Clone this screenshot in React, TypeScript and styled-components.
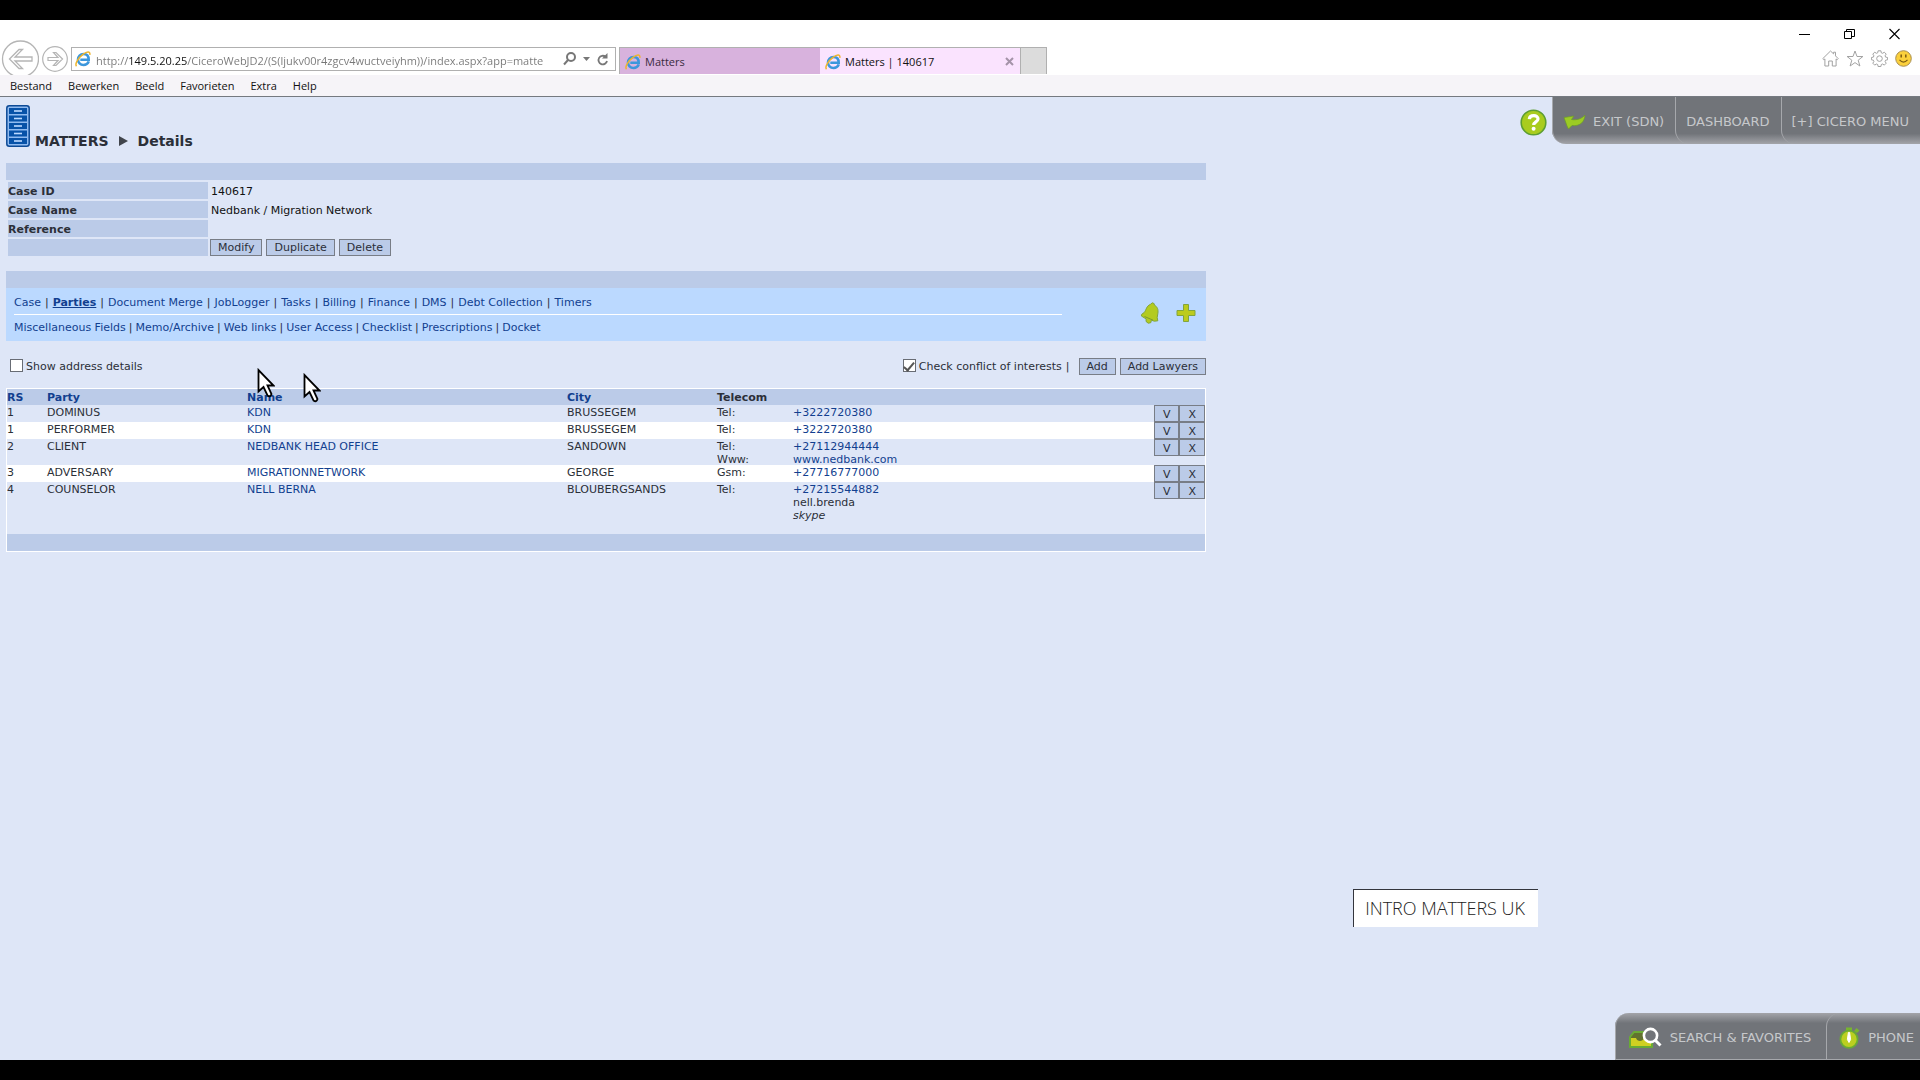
import React, { Fragment } from "react";
import styled, { createGlobalStyle, css } from "styled-components";

const color = {
  page: "#dee6f7",
  bar: "#bbcbe8",
  panel: "#bbd9ff",
  link: "#123f8f",
  text: "#2b2f38",
  edge: "#787d86",
  dock: "#717479",
  dockEdge: "#a6a8ac",
};

const uiFont = `"Open Sans", "Noto Sans", sans-serif`;
const appFont = `"DejaVu Sans", Verdana, sans-serif`;

const GlobalStyle = createGlobalStyle`
  * { box-sizing: border-box; }
  body { margin: 0; background: #000; }
  button, input { font: inherit; color: inherit; margin: 0; }
`;

const Screen = styled.div`
  display: flex;
  flex-direction: column;
  min-height: 100vh;
  padding: 20px 0;
  background: #000;
  font: 11px/13px ${appFont};
  color: ${color.text};
`;

/* ---------- browser chrome ---------- */

const Chrome = styled.header`
  background: #fff;
  font: 11px/16px ${uiFont};
  color: #111;
`;

const TopArea = styled.div`
  display: flex;
  justify-content: space-between;
  height: 55px;
  overflow: hidden;
`;

const NavTools = styled.div`
  display: flex;
  align-items: flex-start;
  padding-top: 20px;
`;

const PlainButton = styled.button`
  display: flex;
  align-items: center;
  justify-content: center;
  padding: 0;
  border: 0;
  background: none;
`;

const RoundButton = styled(PlainButton)<{ $size: number }>`
  width: ${(p) => p.$size}px;
  height: 38px;
  margin-right: 3px;
`;

const AddressBar = styled.form`
  display: flex;
  align-items: center;
  width: 545px;
  height: 24px;
  margin: 7px 3px 0 0;
  padding: 0 6px 0 3px;
  border: 1px solid #b0b0b0;
`;

const UrlInput = styled.input`
  flex: 1;
  min-width: 0;
  height: 22px;
  margin: 0 4px 0 5px;
  padding: 2px 0 0;
  border: 0;
  outline: 0;
  color: transparent;
  background: linear-gradient(90deg, #777 32px, #111 32px 91px, #777 91px);
  background-clip: text;
  -webkit-background-clip: text;
`;

const AddressTools = styled.div`
  display: flex;
  align-items: center;
  gap: 7px;
`;

const TabStrip = styled.div`
  display: flex;
  height: 27px;
  margin-top: 7px;
  border: 1px solid #b0b0b0;
  border-bottom: 0;
`;

const BrowserTab = styled.div<{ $active?: boolean }>`
  display: flex;
  align-items: center;
  width: 200px;
  padding: 1px 6px 0 5px;
  gap: 4px;
  background: ${(p) => (p.$active ? "#fae3fe" : "#d8b2dd")};
  color: ${(p) => (p.$active ? "#111" : "#3a2a3e")};
`;

const TabLabel = styled(PlainButton)`
  flex: 1;
  justify-content: flex-start;
`;

const NewTab = styled(PlainButton)`
  width: 26px;
  border-left: 1px solid #b0b0b0;
  background: #dcdcdc;
`;

const WindowArea = styled.div`
  display: flex;
  flex-direction: column;
  align-items: flex-end;
  padding: 8px 8px 0 0;
`;

const WindowButtons = styled.div`
  display: flex;
  gap: 34px;
  padding-right: 12px;
`;

const BrowserIcons = styled.div`
  display: flex;
  gap: 7px;
  margin-top: 10px;
`;

const MenuBar = styled.nav`
  display: flex;
  gap: 16px;
  height: 22px;
  padding: 0 10px;
  background: #f6f4f8;
  border-bottom: 1px solid #757980;
`;

/* ---------- application ---------- */

const Page = styled.main`
  position: relative;
  display: flex;
  flex-direction: column;
  flex: 1;
  background: ${color.page};
`;

const PageHeader = styled.div`
  display: flex;
  justify-content: space-between;
  height: 66px;
  padding-left: 6px;
`;

const Heading = styled.h1`
  display: flex;
  align-items: flex-end;
  gap: 5px;
  height: 50px;
  margin: 0;
  font-size: 14px;
  line-height: 12px;
`;

const Crumb = styled.span`
  display: flex;
  align-items: center;
  gap: 10px;
`;

const HeaderActions = styled.div`
  display: flex;
  align-items: flex-start;
  gap: 5px;
`;

const HelpButton = styled(PlainButton)`
  height: 51px;
`;

const dockText = css`
  font-size: 13px;
  line-height: 16px;
  color: #c6c8cb;
`;

const TopDock = styled.nav`
  display: flex;
  height: 47px;
  border-bottom-left-radius: 14px;
  background: linear-gradient(${color.dock} 78%, #a3a4a9);
  ${dockText}
`;

const BottomDock = styled.nav`
  display: flex;
  align-self: flex-end;
  height: 47px;
  margin-top: auto;
  border-top-left-radius: 14px;
  border-bottom: 1px solid ${color.dockEdge};
  background: linear-gradient(#a3a4a9, ${color.dock} 22%);
  ${dockText}
`;

const DockButton = styled(PlainButton)`
  gap: 7px;
  padding: 2px 11px 0 10px;
  border-left: 1px solid ${color.dockEdge};
  border-bottom-left-radius: 14px;
`;

const BottomDockButton = styled(PlainButton)`
  gap: 8px;
  padding: 3px 6px 0 12px;
  border-left: 1px solid ${color.dockEdge};
  border-top-left-radius: 14px;

  &:first-child {
    padding-right: 15px;
  }
`;

const Content = styled.div`
  width: min(1200px, calc(100% - 12px));
  margin-left: 6px;
`;

const Bar = styled.div`
  height: 17px;
  background: ${color.bar};
`;

const CaseTable = styled.table`
  margin-bottom: 13px;
  border-spacing: 2px;

  th {
    width: 200px;
    height: 17px;
    padding: 2px 0 0;
    text-align: left;
    background: ${color.bar};
  }
  td {
    padding: 2px 1px 0;
    color: #111;
  }
`;

const ButtonCell = styled.td`
  && {
    padding: 0;
  }
`;

const ButtonGroup = styled.div`
  display: flex;
  gap: 4px;
`;

const ActionButton = styled.button`
  height: 17px;
  padding: 0 7px;
  border: 1px solid ${color.edge};
  background: ${color.bar};
  color: ${color.text};
  line-height: 13px;
`;

const NavPanel = styled.div`
  display: flex;
  align-items: center;
  justify-content: space-between;
  padding: 2px 10px 2px 8px;
  background: ${color.panel};
`;

const NavRows = styled.nav`
  width: 1048px;
`;

const NavRow = styled.div`
  display: flex;
  align-items: center;
  gap: 4px;
  height: 24px;

  & + & {
    gap: 3px;
    height: 25px;
    border-top: 1px solid #fff;
  }
`;

const Link = styled.a<{ $current?: boolean }>`
  color: ${color.link};
  text-decoration: ${(p) => (p.$current ? "underline" : "none")};
  font-weight: ${(p) => (p.$current ? "bold" : "inherit")};
`;

const PanelIcons = styled.div`
  display: flex;
  gap: 16px;
  margin-bottom: 4px;
`;

const Toolbar = styled.div`
  display: flex;
  align-items: center;
  justify-content: space-between;
  margin: 17px 0 13px;
  padding-left: 4px;
`;

const CheckLabel = styled.label`
  display: flex;
  align-items: center;
  gap: 3px;
`;

const CheckBox = styled.input`
  appearance: none;
  display: grid;
  place-items: center;
  width: 13px;
  height: 13px;
  margin-bottom: 2px;
  border: 1px solid #686c74;
  background: #fff;

  &:checked::after {
    content: "";
    width: 4px;
    height: 9px;
    margin-bottom: 2px;
    border: solid #555;
    border-width: 0 2px 2px 0;
    transform: rotate(40deg);
  }
`;

const ToolbarRight = styled.div`
  display: flex;
  align-items: center;
  gap: 4px;
`;

const Divider = styled.span`
  padding-right: 5px;
`;

const PartyTable = styled.table`
  width: 100%;
  table-layout: fixed;
  border: 1px solid #fff;
  border-spacing: 0;

  th,
  td {
    padding: 0;
    text-align: left;
    vertical-align: top;
    line-height: 15px;
  }
  th {
    height: 16px;
    padding-top: 1px;
    background: ${color.bar};
  }
  tfoot td {
    height: 17px;
    background: ${color.bar};
  }
`;

const Col = styled.col<{ $w?: number }>`
  width: ${(p) => (p.$w ? `${p.$w}px` : "auto")};
`;

const PartyRow = styled.tr<{ $white: boolean; $tall: boolean }>`
  height: ${(p) => (p.$tall ? 52 : 17)}px;
  background: ${(p) => (p.$white ? "#fff" : "transparent")};
`;

const Line = styled.div<{ $italic?: boolean }>`
  height: 13px;
  font-style: ${(p) => (p.$italic ? "italic" : "normal")};
`;

const RowButtons = styled.div`
  display: flex;
`;

const RowButton = styled(ActionButton)`
  flex: 1;
  padding: 2px 0 0;
`;

const Note = styled.aside`
  position: absolute;
  right: 382px;
  bottom: 133px;
  padding: 5px 13px 6px 11px;
  border: solid #33353c;
  border-width: 1px 0 0 1px;
  background: #fff;
  font: 300 18px/26px ${uiFont};
  color: #222;
`;

const Pointer = styled.svg<{ $x: number; $y: number }>`
  position: absolute;
  left: ${(p) => p.$x}px;
  top: ${(p) => p.$y}px;
  pointer-events: none;
`;

/* ---------- drawings ---------- */

const BrowserLogo = () => (
  <svg width="16" height="16" viewBox="0 0 16 16" fill="none">
    <path d="M13.8 10.4C12.8 13 10.900 14 8.500 14 5.300 14 3 11.700 3 8.500S5.300 3 8.500 3s5.200 2.200 5.200 5.700H5.300" stroke="#3c97dc" strokeWidth="2.600" />
    <path d="M1.500 15.200C-.5 13 3.500 6.500 8 3.300 11.500.8 15.500-.3 14.800 3.800" stroke="#efb52c" strokeWidth="1.500" />
  </svg>
);

const BackArrow = () => (
  <svg width="38" height="38" viewBox="0 0 38 38" fill="#fff" stroke="#b5b5b5" strokeWidth="1.300">
    <circle cx="19.500" cy="19" r="18" />
    <path d="M8.500 19 18 9.500h3.500L14 17h17v4H14l7.500 7.500H18z" />
  </svg>
);

const ForwardArrow = () => (
  <svg width="26" height="26" viewBox="0 0 26 26" fill="#fff" stroke="#b5b5b5" strokeWidth="1.200">
    <circle cx="13" cy="13" r="12.300" />
    <path d="M20.500 13 14 6.500h-2.500L16 11.500H6v3h10l-4.500 5H14z" />
  </svg>
);

const SearchIcon = () => (
  <svg width="13" height="14" viewBox="0 0 13 14" fill="none" stroke="#777" strokeWidth="2">
    <circle cx="8" cy="5" r="4" />
    <path d="M5 8 1 12.500" />
  </svg>
);

const CaretIcon = () => (
  <svg width="7" height="4" viewBox="0 0 7 4" fill="#777">
    <path d="M0 0h7L3.500 4z" />
  </svg>
);

const RefreshIcon = () => (
  <svg width="12" height="13" viewBox="0 0 12 13" fill="none" stroke="#777" strokeWidth="1.800">
    <path d="M8.500 3.700A4.300 4.300 0 1 0 10 8" />
    <path d="M10.500 0v5.500H5z" fill="#777" stroke="none" />
  </svg>
);

const CloseTabIcon = () => (
  <svg width="9" height="9" viewBox="0 0 9 9" stroke="#a493a8" strokeWidth="2">
    <path d="m1 1 7 7M8 1 1 8" />
  </svg>
);

const MinimizeIcon = () => (
  <svg width="11" height="12" viewBox="0 0 11 12" stroke="#000">
    <path d="M0 6.500h11" />
  </svg>
);

const RestoreIcon = () => (
  <svg width="11" height="12" viewBox="0 0 11 12" fill="none" stroke="#000">
    <path d="M.5 3.500h7v7h-7zM2.500 3.500v-2h8v7h-3" />
  </svg>
);

const CloseIcon = () => (
  <svg width="11" height="12" viewBox="0 0 11 12" stroke="#000" strokeWidth="1.100">
    <path d="m.5 1 10 10M10.500 1l-10 10" />
  </svg>
);

const HomeIcon = () => (
  <svg width="17" height="17" viewBox="0 0 17 17" fill="none" stroke="#a2a2a2">
    <path d="M8.500 1 .8 8.600l1.100 1.200 1-.9v7.100h3.800v-5h3.600v5h3.800V8.900l1 .9 1.100-1.200-2.700-2.700V2.200h-1.900v1.700z" />
  </svg>
);

const StarIcon = () => (
  <svg width="18" height="17" viewBox="0 0 18 17" fill="none" stroke="#a2a2a2">
    <path d="m9 1 2 5.500h5.900l-4.700 3.700 1.700 5.800L9 12.600 4.100 16l1.700-5.800L1.100 6.500H7z" />
  </svg>
);

const GearIcon = () => (
  <svg width="17" height="17" viewBox="0 0 17 17" fill="none" stroke="#a2a2a2">
    <path d="M7.100.8h2.800l.4 2 1.300.5 1.700-1.100 1.900 1.900-1.100 1.700.5 1.300 2 .4v2.300l-2 .4-.5 1.300 1.100 1.700-1.900 1.900-1.700-1.100-1.300.5-.4 2H7.100l-.4-2-1.300-.5-1.700 1.100-1.900-1.900 1.100-1.700-.5-1.300-2-.4V7.500l2-.4.5-1.300-1.100-1.700 1.900-1.900 1.700 1.100 1.300-.5z" />
    <circle cx="8.500" cy="8.600" r="2.800" />
  </svg>
);

const SmileIcon = () => (
  <svg width="17" height="17" viewBox="0 0 17 17">
    <circle cx="8.500" cy="8.500" r="7.800" fill="#fbd03c" stroke="#a98f53" />
    <path d="M6.200 4.500v3M10.800 4.500v3" stroke="#7c5b12" strokeWidth="1.500" />
    <path d="M4.500 9.800q4 4.500 8 0" stroke="#7c5b12" strokeWidth="1.200" fill="none" />
  </svg>
);

const CabinetIcon = () => (
  <svg width="24" height="42" viewBox="0 0 24 42">
    <rect x=".8" y=".8" width="22.400" height="40.400" rx="2.500" fill="#8fbaf0" stroke="#0d4a96" strokeWidth="1.500" />
    {[3, 10.5, 18, 25.5, 33].map((y) => (
      <g key={y}>
        <rect x="3" y={y} width="18" height="6" fill="#0752a8" />
        <rect x="8" y={y + 2.2} width="8" height="1.600" fill="#bcd9ff" />
      </g>
    ))}
  </svg>
);

const CrumbArrow = () => (
  <svg width="9" height="10" viewBox="0 0 9 10" fill="#41454c">
    <path d="M0 0v10l9-5z" />
  </svg>
);

const HelpIcon = () => (
  <svg width="27" height="27" viewBox="0 0 27 27" fill="none">
    <circle cx="13.500" cy="13.500" r="12.300" fill="#a9cc1e" stroke="#5d9e32" strokeWidth="1.600" />
    <path d="M9.300 10.200c.3-4.700 8.900-4.600 8.700-.2-.1 3-4.300 2.900-4.300 6.100" stroke="#fff" strokeWidth="3.200" />
    <circle cx="13.600" cy="19.800" r="2" fill="#fff" />
  </svg>
);

const ExitIcon = () => (
  <svg width="23" height="16" viewBox="0 0 23 16">
    <path d="M1 3.500 11 2 8.500 5.500C14 6.500 19 4.500 22 1c-.5 7-5 11.500-13 10.500L5.500 15 4 12z" fill="#9ccb24" stroke="#6b9c2a" strokeWidth=".7" />
  </svg>
);

const BellIcon = () => (
  <svg width="20" height="22" viewBox="0 0 20 22">
    <path d="M10.500 2.300 12.300.8l1.800.8.300 1.500c3.200 1.800 4 4.600 3.500 8.100l-.7 4.300.6 3.300-3.500.4-2.900-1-.6 2.500-2.600.5-2.200-1.800.2-2.400L1.400 14l.3-1.700 2.500-1.800C6.300 8 6.300 4 10.500 2.300z" fill="#b3cb20" stroke="#82a53c" />
    <path d="m4.500 14.500 8.500 3.600" stroke="#7d9a2c" />
  </svg>
);

const PlusIcon = () => (
  <svg width="20" height="20" viewBox="0 0 20 20">
    <path d="M7.500 1.500h5v6H19v5h-6.500v6h-5v-6H1v-5h6.500z" fill="#bccb1d" stroke="#82a53c" />
  </svg>
);

const FinderIcon = () => (
  <svg width="34" height="22" viewBox="0 0 34 22" fill="none">
    <path d="M2 20V10l4-5h18v15z" fill="#62722f" stroke="#69ab35" strokeWidth="2" />
    <path d="M3 11h5c1 4 7 4 8 0h7v8H3z" fill="#d0d022" />
    <circle cx="22.500" cy="8.500" r="6.600" fill="#717479" stroke="#fff" strokeWidth="2.600" />
    <path d="m27 13 5.500 5.500" stroke="#fff" strokeWidth="3" />
  </svg>
);

const TimerIcon = () => (
  <svg width="21" height="22" viewBox="0 0 21 22">
    <path d="M7 .5h6V4H7zM15 4l2.500-3 3 2.500L18 6z" fill="#78b42f" />
    <circle cx="10" cy="12.300" r="8.600" fill="#bbcf20" stroke="#69ab35" strokeWidth="1.800" />
    <path d="M9.400 5.500h1.200l1 7-1.600 3-1.600-3z" fill="#fff" stroke="#fff" />
  </svg>
);

const MousePointer = ({ x, y }: { x: number; y: number }) => (
  <Pointer $x={x} $y={y} width="18" height="31" viewBox="0 0 18 31">
    <path d="M1.500 2v21.500l5-4.500 4 8.500q3 2 4-1.500l-4-8.500h6z" fill="#fff" stroke="#000" strokeWidth="1.800" />
  </Pointer>
);

/* ---------- data ---------- */

const menus = ["Bestand", "Bewerken", "Beeld", "Favorieten", "Extra", "Help"];

const navRows = [
  ["Case", "Parties", "Document Merge", "JobLogger", "Tasks", "Billing", "Finance", "DMS", "Debt Collection", "Timers"],
  ["Miscellaneous Fields", "Memo/Archive", "Web links", "User Access", "Checklist", "Prescriptions", "Docket"],
];

const caseFields = [
  ["Case ID", "140617"],
  ["Case Name", "Nedbank / Migration Network"],
  ["Reference", ""],
];

type Contact = { kind?: string; value: string; style?: "plain" | "italic" };
type Party = { rs: number; role: string; name: string; city: string; contacts: Contact[] };

const parties: Party[] = [
  { rs: 1, role: "DOMINUS", name: "KDN", city: "BRUSSEGEM", contacts: [{ kind: "Tel:", value: "+3222720380" }] },
  { rs: 1, role: "PERFORMER", name: "KDN", city: "BRUSSEGEM", contacts: [{ kind: "Tel:", value: "+3222720380" }] },
  {
    rs: 2, role: "CLIENT", name: "NEDBANK HEAD OFFICE", city: "SANDOWN",
    contacts: [{ kind: "Tel:", value: "+27112944444" }, { kind: "Www:", value: "www.nedbank.com" }],
  },
  { rs: 3, role: "ADVERSARY", name: "MIGRATIONNETWORK", city: "GEORGE", contacts: [{ kind: "Gsm:", value: "+27716777000" }] },
  {
    rs: 4, role: "COUNSELOR", name: "NELL BERNA", city: "BLOUBERGSANDS",
    contacts: [
      { kind: "Tel:", value: "+27215544882" },
      { value: "nell.brenda", style: "plain" },
      { value: "skype", style: "italic" },
    ],
  },
];

/* ---------- sections ---------- */

const BrowserChrome = () => (
  <Chrome>
    <TopArea>
      <NavTools>
        <RoundButton $size={39} aria-label="Back"><BackArrow /></RoundButton>
        <RoundButton $size={26} aria-label="Forward"><ForwardArrow /></RoundButton>
        <AddressBar onSubmit={(e) => e.preventDefault()}>
          <BrowserLogo />
          <UrlInput
            aria-label="Address"
            defaultValue="http://149.5.20.25/CiceroWebJD2/(S(ljukv00r4zgcv4wuctveiyhm))/index.aspx?app=matte"
          />
          <AddressTools>
            <PlainButton type="button" aria-label="Search"><SearchIcon /></PlainButton>
            <PlainButton type="button" aria-label="History"><CaretIcon /></PlainButton>
            <PlainButton type="button" aria-label="Refresh"><RefreshIcon /></PlainButton>
          </AddressTools>
        </AddressBar>
        <TabStrip>
          <BrowserTab>
            <BrowserLogo />
            <TabLabel>Matters</TabLabel>
          </BrowserTab>
          <BrowserTab $active>
            <BrowserLogo />
            <TabLabel>Matters | 140617</TabLabel>
            <PlainButton aria-label="Close tab"><CloseTabIcon /></PlainButton>
          </BrowserTab>
          <NewTab aria-label="New tab" />
        </TabStrip>
      </NavTools>
      <WindowArea>
        <WindowButtons>
          <PlainButton aria-label="Minimize"><MinimizeIcon /></PlainButton>
          <PlainButton aria-label="Restore"><RestoreIcon /></PlainButton>
          <PlainButton aria-label="Close"><CloseIcon /></PlainButton>
        </WindowButtons>
        <BrowserIcons>
          <PlainButton aria-label="Home"><HomeIcon /></PlainButton>
          <PlainButton aria-label="Favorites"><StarIcon /></PlainButton>
          <PlainButton aria-label="Settings"><GearIcon /></PlainButton>
          <PlainButton aria-label="Feedback"><SmileIcon /></PlainButton>
        </BrowserIcons>
      </WindowArea>
    </TopArea>
    <MenuBar>
      {menus.map((m) => <PlainButton key={m}>{m}</PlainButton>)}
    </MenuBar>
  </Chrome>
);

const CaseDetails = () => (
  <section>
    <Bar />
    <CaseTable>
      <tbody>
        {caseFields.map(([label, value]) => (
          <tr key={label}>
            <th scope="row">{label}</th>
            <td>{value}</td>
          </tr>
        ))}
        <tr>
          <th />
          <ButtonCell>
            <ButtonGroup>
              <ActionButton>Modify</ActionButton>
              <ActionButton>Duplicate</ActionButton>
              <ActionButton>Delete</ActionButton>
            </ButtonGroup>
          </ButtonCell>
        </tr>
      </tbody>
    </CaseTable>
  </section>
);

const SectionNav = () => (
  <section>
    <Bar />
    <NavPanel>
      <NavRows>
        {navRows.map((row) => (
          <NavRow key={row[0]}>
            {row.map((item, i) => (
              <Fragment key={item}>
                {i > 0 && <span>|</span>}
                <Link href="#" $current={item === "Parties"}>{item}</Link>
              </Fragment>
            ))}
          </NavRow>
        ))}
      </NavRows>
      <PanelIcons>
        <PlainButton aria-label="Reminder"><BellIcon /></PlainButton>
        <PlainButton aria-label="Add item"><PlusIcon /></PlainButton>
      </PanelIcons>
    </NavPanel>
  </section>
);

const PartyList = () => (
  <section>
    <Toolbar>
      <CheckLabel>
        <CheckBox type="checkbox" />
        Show address details
      </CheckLabel>
      <ToolbarRight>
        <CheckLabel>
          <CheckBox type="checkbox" defaultChecked />
          Check conflict of interests
        </CheckLabel>
        <Divider>|</Divider>
        <ActionButton>Add</ActionButton>
        <ActionButton>Add Lawyers</ActionButton>
      </ToolbarRight>
    </Toolbar>
    <PartyTable>
      <colgroup>
        <Col $w={40} />
        <Col $w={200} />
        <Col $w={320} />
        <Col $w={150} />
        <Col $w={76} />
        <Col />
        <Col $w={51} />
      </colgroup>
      <thead>
        <tr>
          {["RS", "Party", "Name", "City"].map((h) => (
            <th key={h} scope="col"><Link href="#">{h}</Link></th>
          ))}
          <th scope="col" colSpan={3}>Telecom</th>
        </tr>
      </thead>
      <tbody>
        {parties.map((p, i) => (
          <PartyRow key={i} $white={i % 2 === 1} $tall={p.contacts.length > 2}>
            <td>{p.rs}</td>
            <td>{p.role}</td>
            <td><Link href="#">{p.name}</Link></td>
            <td>{p.city}</td>
            <td>{p.contacts.map((c) => <Line key={c.value}>{c.kind}</Line>)}</td>
            <td>
              {p.contacts.map((c) => (
                <Line key={c.value} $italic={c.style === "italic"}>
                  {c.style ? c.value : <Link href="#">{c.value}</Link>}
                </Line>
              ))}
            </td>
            <td>
              <RowButtons>
                <RowButton>V</RowButton>
                <RowButton>X</RowButton>
              </RowButtons>
            </td>
          </PartyRow>
        ))}
      </tbody>
      <tfoot>
        <tr><td colSpan={7} /></tr>
      </tfoot>
    </PartyTable>
  </section>
);

export default function App() {
  return (
    <Screen>
      <GlobalStyle />
      <BrowserChrome />
      <Page>
        <PageHeader>
          <Heading>
            <CabinetIcon />
            <Crumb>MATTERS <CrumbArrow /> Details</Crumb>
          </Heading>
          <HeaderActions>
            <HelpButton aria-label="Help"><HelpIcon /></HelpButton>
            <TopDock>
              <DockButton><ExitIcon />EXIT (SDN)</DockButton>
              <DockButton>DASHBOARD</DockButton>
              <DockButton>[+] CICERO MENU</DockButton>
            </TopDock>
          </HeaderActions>
        </PageHeader>
        <Content>
          <CaseDetails />
          <SectionNav />
          <PartyList />
        </Content>
        <BottomDock>
          <BottomDockButton><FinderIcon />SEARCH &amp; FAVORITES</BottomDockButton>
          <BottomDockButton><TimerIcon />PHONE</BottomDockButton>
        </BottomDock>
        <Note>INTRO MATTERS UK</Note>
        <MousePointer x={257} y={271} />
        <MousePointer x={303} y={276} />
      </Page>
    </Screen>
  );
}
